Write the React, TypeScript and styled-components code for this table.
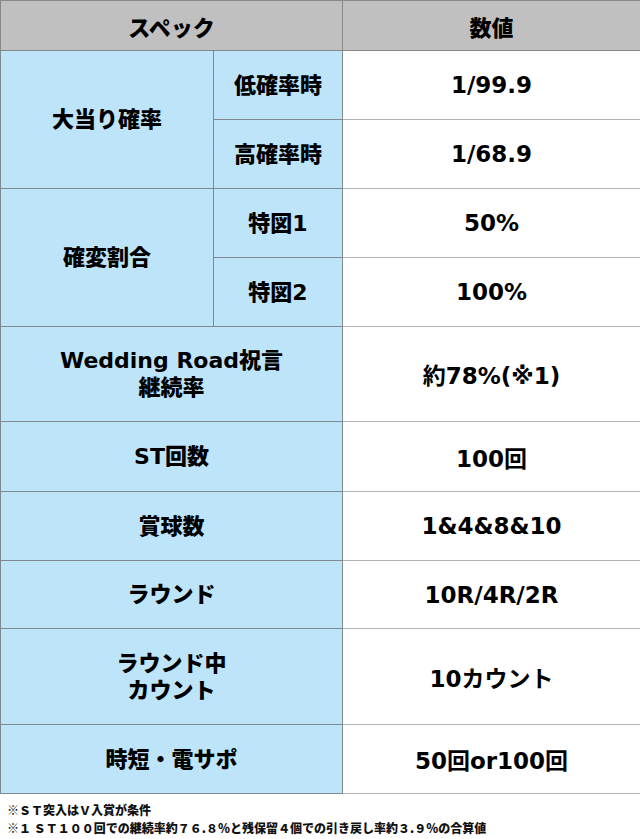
import React from 'react';
import styled, { createGlobalStyle } from 'styled-components';

const GlobalStyle = createGlobalStyle`
  body {
    margin: 0;
    background: #fff;
    font-family: "DejaVu Sans", "Noto Sans CJK JP", sans-serif;
    color: #000;
  }
`;

const Page = styled.div`
  width: 640px;
`;

const SpecTable = styled.table`
  width: 640px;
  table-layout: fixed;
  border-collapse: collapse;
  border: 1px solid #888;
`;

const Row = styled.tr<{ $h: number }>`
  height: ${(p) => p.$h}px;
`;

const HeadCell = styled.th`
  background: #c0c0c0;
  border: 1px solid #888;
  font-size: 22px;
  font-weight: 900;
  text-align: center;
  vertical-align: middle;
  padding: 0;
`;

const LabelCell = styled.td`
  background: #bde4f8;
  border: 1px solid #7f8a90;
  font-size: 22px;
  font-weight: 900;
  text-align: center;
  vertical-align: middle;
  line-height: 27px;
  padding: 0;
`;

const ValueCell = styled.td`
  background: #fff;
  border: 1px solid #888;
  border-bottom-color: #b4b4b4;
  font-size: 23px;
  font-weight: 700;
  text-align: center;
  vertical-align: middle;
  padding: 0;
`;

const Notes = styled.div`
  padding: 7px 0 0 7px;
  font-family: "Noto Sans CJK JP", sans-serif;
  font-size: 12px;
  font-weight: 900;
  line-height: 18px;
  color: #111;
`;

const App: React.FC = () => {
  return (
    <Page>
      <GlobalStyle />
      <SpecTable>
        <colgroup>
          <col style={{ width: 213 }} />
          <col style={{ width: 129 }} />
          <col style={{ width: 298 }} />
        </colgroup>
        <tbody>
          <Row $h={50}>
            <HeadCell colSpan={2}>スペック</HeadCell>
            <HeadCell>数値</HeadCell>
          </Row>
          <Row $h={69}>
            <LabelCell rowSpan={2}>大当り確率</LabelCell>
            <LabelCell>低確率時</LabelCell>
            <ValueCell>1/99.9</ValueCell>
          </Row>
          <Row $h={69}>
            <LabelCell>高確率時</LabelCell>
            <ValueCell>1/68.9</ValueCell>
          </Row>
          <Row $h={69}>
            <LabelCell rowSpan={2}>確変割合</LabelCell>
            <LabelCell>特図1</LabelCell>
            <ValueCell>50%</ValueCell>
          </Row>
          <Row $h={69}>
            <LabelCell>特図2</LabelCell>
            <ValueCell>100%</ValueCell>
          </Row>
          <Row $h={95}>
            <LabelCell colSpan={2}>
              Wedding Road祝言
              <br />
              継続率
            </LabelCell>
            <ValueCell>約78%(※1)</ValueCell>
          </Row>
          <Row $h={70}>
            <LabelCell colSpan={2}>ST回数</LabelCell>
            <ValueCell>100回</ValueCell>
          </Row>
          <Row $h={69}>
            <LabelCell colSpan={2}>賞球数</LabelCell>
            <ValueCell>1&amp;4&amp;8&amp;10</ValueCell>
          </Row>
          <Row $h={68}>
            <LabelCell colSpan={2}>ラウンド</LabelCell>
            <ValueCell>10R/4R/2R</ValueCell>
          </Row>
          <Row $h={96}>
            <LabelCell colSpan={2}>
              ラウンド中
              <br />
              カウント
            </LabelCell>
            <ValueCell>10カウント</ValueCell>
          </Row>
          <Row $h={69}>
            <LabelCell colSpan={2}>時短・電サポ</LabelCell>
            <ValueCell>50回or100回</ValueCell>
          </Row>
        </tbody>
      </SpecTable>
      <Notes>
        ※ＳＴ突入はＶ入賞が条件
        <br />
        ※１ ＳＴ１００回での継続率約７６.８％と残保留４個での引き戻し率約３.９％の合算値
      </Notes>
    </Page>
  );
};

export default App;
